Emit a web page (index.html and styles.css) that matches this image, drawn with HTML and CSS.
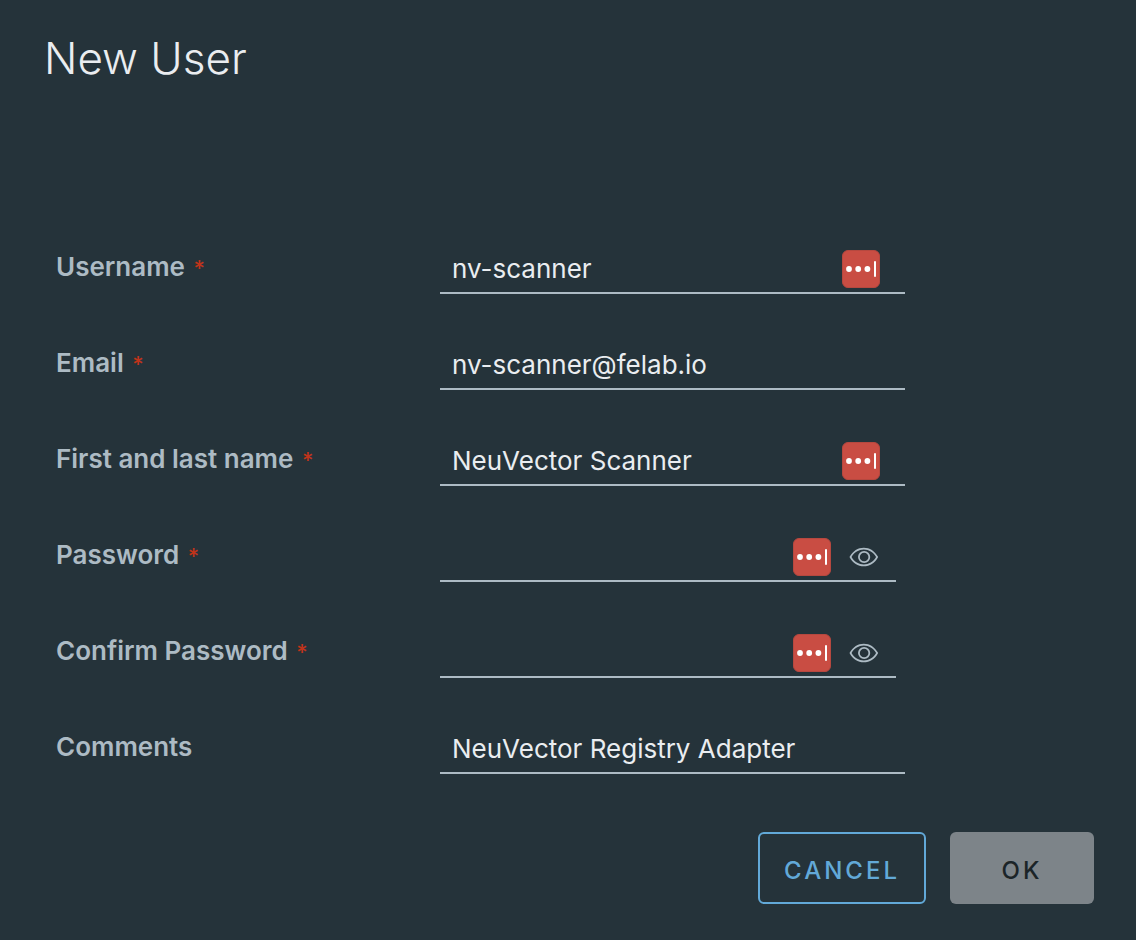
FILE: index.html
```html
<!DOCTYPE html>
<html lang="en">
<head>
<meta charset="utf-8">
<meta name="viewport" content="width=device-width, initial-scale=1">
<title>New User</title>
<link rel="stylesheet" href="styles.css">
</head>
<body>
<svg class="symbols" aria-hidden="true">
  <symbol id="vault" viewBox="0 0 38 38">
    <rect x="0.5" y="0.5" width="37" height="37" rx="5.5" fill="#c94d43" stroke="#b6483f"/>
    <circle cx="7" cy="19" r="2.9" fill="#fff"/>
    <circle cx="16.2" cy="19" r="2.9" fill="#fff"/>
    <circle cx="25.4" cy="19" r="2.9" fill="#fff"/>
    <rect x="32" y="11" width="2" height="16" rx="1" fill="#fff"/>
  </symbol>
  <symbol id="eye" viewBox="0 0 36 36">
    <path fill="currentColor" d="M33.62,17.53c-3.37-6.23-9.28-10-15.82-10S5.34,11.3,2,17.53L1.72,18l.26.48c3.37,6.23,9.28,10,15.82,10s12.46-3.72,15.82-10l.26-.48ZM17.8,26.43C12.17,26.43,7,23.29,4,18c3-5.29,8.17-8.43,13.8-8.43S28.54,12.72,31.59,18C28.54,23.29,23.42,26.43,17.8,26.43Z"/>
    <path fill="currentColor" d="M18.09,11.17A6.86,6.86,0,1,0,25,18,6.86,6.86,0,0,0,18.09,11.17Zm0,11.72A4.86,4.86,0,1,1,23,18,4.87,4.87,0,0,1,18.09,22.89Z"/>
  </symbol>
</svg>
<main class="dialog">
  <h1 class="title">New User</h1>
  <form class="form">
    <div class="row">
      <label class="label" for="username">Username <span class="required">*</span></label>
      <div class="control">
        <input class="input" id="username" type="text" value="nv-scanner">
        <button class="icon-button" type="button" aria-label="Fill username"><svg class="vault"><use href="#vault"/></svg></button>
      </div>
    </div>
    <div class="row">
      <label class="label" for="email">Email <span class="required">*</span></label>
      <div class="control">
        <input class="input" id="email" type="email" value="nv-scanner@felab.io">
      </div>
    </div>
    <div class="row">
      <label class="label" for="realname">First and last name <span class="required">*</span></label>
      <div class="control">
        <input class="input" id="realname" type="text" value="NeuVector Scanner">
        <button class="icon-button" type="button" aria-label="Fill name"><svg class="vault"><use href="#vault"/></svg></button>
      </div>
    </div>
    <div class="row">
      <label class="label" for="password">Password <span class="required">*</span></label>
      <div class="control control-password">
        <input class="input" id="password" type="password">
        <button class="icon-button" type="button" aria-label="Fill password"><svg class="vault"><use href="#vault"/></svg></button>
        <button class="icon-button" type="button" aria-label="Show password"><svg class="eye"><use href="#eye"/></svg></button>
      </div>
    </div>
    <div class="row">
      <label class="label" for="confirm">Confirm Password <span class="required">*</span></label>
      <div class="control control-password">
        <input class="input" id="confirm" type="password">
        <button class="icon-button" type="button" aria-label="Fill confirmation"><svg class="vault"><use href="#vault"/></svg></button>
        <button class="icon-button" type="button" aria-label="Show confirmation"><svg class="eye"><use href="#eye"/></svg></button>
      </div>
    </div>
    <div class="row">
      <label class="label" for="comments">Comments</label>
      <div class="control">
        <input class="input" id="comments" type="text" value="NeuVector Registry Adapter">
      </div>
    </div>
    <div class="actions">
      <button class="button button-outline" type="button">CANCEL</button>
      <button class="button button-primary" type="submit" disabled>OK</button>
    </div>
  </form>
</main>
</body>
</html>
```
FILE: styles.css
```css
* {
  box-sizing: border-box;
}

body {
  margin: 0;
  background: #25333a;
  color: #eaedf0;
  font-family: Inter, "Liberation Sans", sans-serif;
  font-size: 26px;
}

.symbols {
  display: none;
}

.dialog {
  padding: 32px 42px 36px 44px;
}

.title {
  margin: 0 0 162px;
  font-size: 44px;
  font-weight: 300;
  line-height: 52px;
}

.form {
  display: flex;
  flex-direction: column;
  gap: 48px;
}

.row {
  display: grid;
  grid-template-columns: 384px minmax(0, 465px);
  padding-left: 12px;
}

.label {
  color: #adbbc4;
  font-size: 26px;
  font-weight: 600;
  line-height: 42px;
}

.required {
  margin-left: 2px;
  color: #c0341a;
  font-size: 22px;
  font-weight: 500;
}

.control {
  display: flex;
  align-items: center;
  height: 48px;
  padding-right: 25px;
  border-bottom: 2px solid #adbbc4;
}

.control-password {
  gap: 17px;
  margin-right: 9px;
  padding-right: 16px;
}

.input {
  flex: 1;
  min-width: 0;
  height: 44px;
  padding: 0 12px 2px;
  border: 0;
  outline: 0;
  background: transparent;
  color: inherit;
  font: inherit;
}

.icon-button {
  flex: none;
  padding: 0;
  border: 0;
  background: transparent;
  color: #adbbc4;
}

.vault,
.eye {
  display: block;
  width: 38px;
  height: 38px;
}

.eye {
  width: 32px;
  height: 32px;
}

.actions {
  display: flex;
  justify-content: flex-end;
  gap: 24px;
  margin-top: 10px;
}

.button {
  min-width: 144px;
  height: 72px;
  padding: 4px 24px 0;
  border: 2px solid transparent;
  border-radius: 6px;
  font-family: inherit;
  font-size: 24px;
  font-weight: 500;
  letter-spacing: 3px;
}

.button-outline {
  border-color: #62a9d8;
  background: transparent;
  color: #62a9d8;
}

.button-primary {
  background: #7d8489;
  color: #1b2428;
}
```
